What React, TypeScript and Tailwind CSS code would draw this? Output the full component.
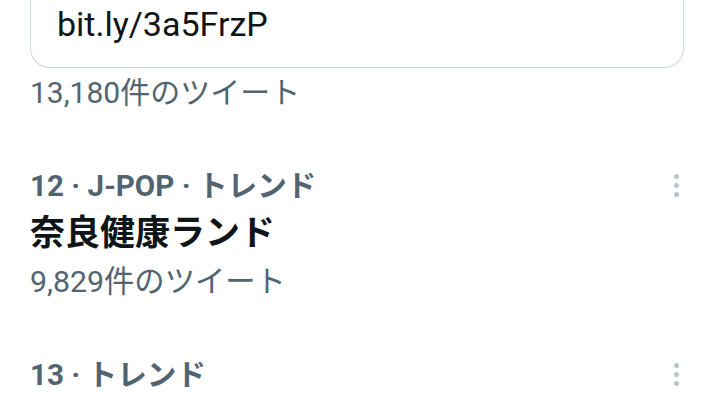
import { ReactNode } from "react";

const font = { fontFamily: "Roboto, 'Noto Sans CJK JP', sans-serif" };

function MoreDots() {
  return (
    <div className="flex flex-col items-center gap-[4px] pt-[12px]">
      <span className="block w-[5px] h-[5px] rounded-full bg-[#b9c5cd]" />
      <span className="block w-[5px] h-[5px] rounded-full bg-[#b9c5cd]" />
      <span className="block w-[5px] h-[5px] rounded-full bg-[#b9c5cd]" />
    </div>
  );
}

function Trend({ meta, title, count }: { meta: string; title?: ReactNode; count?: string }) {
  return (
    <div className="flex justify-between pl-[30px] pr-[35px] pt-[45px]">
      <div>
        <div className="text-[29.6px] leading-[48px] font-bold text-[#536471]">{meta}</div>
        {title && (
          <div className="text-[35px] leading-[48px] font-bold text-[#0f1419]">{title}</div>
        )}
        {count && (
          <div className="text-[30.3px] leading-[48px] text-[#536471]">{count}</div>
        )}
      </div>
      <MoreDots />
    </div>
  );
}

export default function App() {
  return (
    <div className="w-[714px] h-[401px] overflow-hidden bg-white" style={font}>
      {/* Link card, top cut off */}
      <div className="mx-[30px] h-[68px] border border-t-0 border-[#cfd9de] rounded-b-[20px] pl-[26px]">
        <div className="text-[34px] leading-[48px] text-[#0f1419]">bit.ly/3a5FrzP</div>
      </div>
      <div className="pl-[30px] text-[30px] leading-[48px] text-[#536471] mt-[1px]">13,180件のツイート</div>

      <Trend meta="12 · J-POP · トレンド" title="奈良健康ランド" count="9,829件のツイート" />
      <Trend meta="13 · トレンド" />
    </div>
  );
}
